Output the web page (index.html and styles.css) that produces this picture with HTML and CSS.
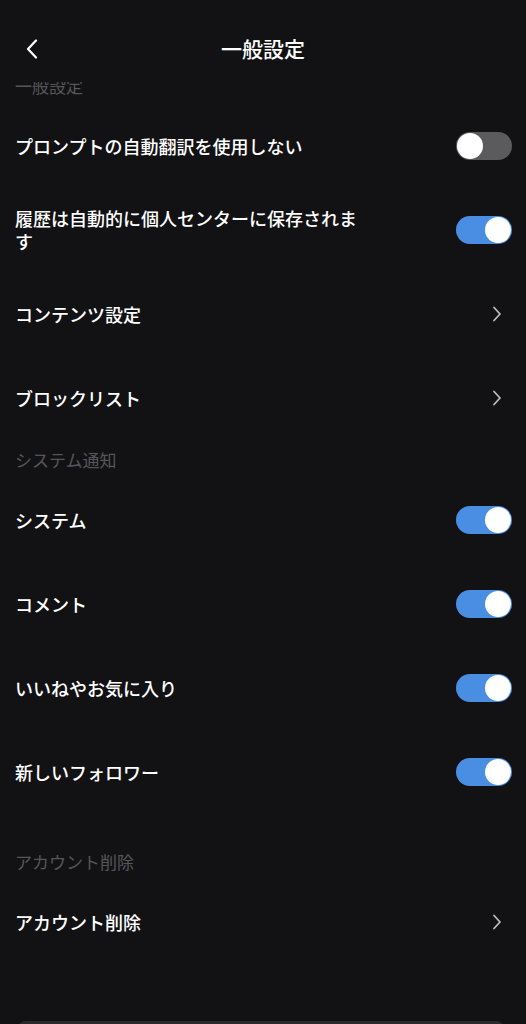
FILE: index.html
```html
<!DOCTYPE html>
<html lang="ja">
<head>
  <meta charset="UTF-8">
  <title>一般設定</title>
  <link rel="stylesheet" href="styles.css">
</head>
<body>
  <div class="screen">
    <div class="header">
      <span class="back">
        <svg width="12" height="20" viewBox="0 0 12 20"><path d="M10 1.5 L2 10 L10 18.5" fill="none" stroke="#fff" stroke-width="2.2" stroke-linecap="round" stroke-linejoin="round"/></svg>
      </span>
      <h1 class="title">一般設定</h1>
    </div>

    <div class="list">
      <div class="section-label">一般設定</div>
      <div class="row">
        <span class="label">プロンプトの自動翻訳を使用しない</span>
        <span class="toggle"></span>
      </div>
      <div class="row">
        <span class="label">履歴は自動的に個人センターに保存されます</span>
        <span class="toggle on"></span>
      </div>
      <div class="row">
        <span class="label">コンテンツ設定</span>
        <span class="chevron"><svg width="10" height="16" viewBox="0 0 10 16"><path d="M2 1.5 L8 8 L2 14.5" fill="none" stroke="#bdbdbd" stroke-width="1.8" stroke-linecap="round" stroke-linejoin="round"/></svg></span>
      </div>
      <div class="row">
        <span class="label">ブロックリスト</span>
        <span class="chevron"><svg width="10" height="16" viewBox="0 0 10 16"><path d="M2 1.5 L8 8 L2 14.5" fill="none" stroke="#bdbdbd" stroke-width="1.8" stroke-linecap="round" stroke-linejoin="round"/></svg></span>
      </div>

      <div class="section-label">システム通知</div>
      <div class="row">
        <span class="label">システム</span>
        <span class="toggle on"></span>
      </div>
      <div class="row">
        <span class="label">コメント</span>
        <span class="toggle on"></span>
      </div>
      <div class="row">
        <span class="label">いいねやお気に入り</span>
        <span class="toggle on"></span>
      </div>
      <div class="row">
        <span class="label">新しいフォロワー</span>
        <span class="toggle on"></span>
      </div>

      <div class="section-label spaced">アカウント削除</div>
      <div class="row">
        <span class="label">アカウント削除</span>
        <span class="chevron"><svg width="10" height="16" viewBox="0 0 10 16"><path d="M2 1.5 L8 8 L2 14.5" fill="none" stroke="#bdbdbd" stroke-width="1.8" stroke-linecap="round" stroke-linejoin="round"/></svg></span>
      </div>
    </div>

    <div class="sheet"></div>
  </div>
</body>
</html>
```

FILE: styles.css
```css
html, body {
  margin: 0;
  background: #121214;
}
body {
  font-family: "Noto Sans CJK JP", "Noto Sans", sans-serif;
  color: #fff;
}
.screen {
  height: 1024px;
  overflow: hidden;
}
.header {
  position: relative;
  z-index: 2;
  height: 82px;
  background: #121214;
  display: flex;
  align-items: center;
  justify-content: center;
  padding-top: 14px;
  box-sizing: border-box;
}
.back {
  position: absolute;
  left: 26px;
  top: 39px;
  display: flex;
}
.title {
  margin: 0;
  font-size: 21px;
  font-weight: 500;
  line-height: 1;
}
.list {
  margin-top: -16px;
  padding: 0 14px 0 15px;
}
.section-label {
  height: 38px;
  display: flex;
  align-items: center;
  font-size: 17px;
  color: #56565a;
}
.section-label.spaced {
  margin-top: 28px;
}
.row {
  height: 84px;
  display: flex;
  align-items: center;
  justify-content: space-between;
}
.label {
  font-size: 18px;
  font-weight: 500;
  line-height: 23px;
  max-width: 350px;
}
.toggle {
  width: 56px;
  height: 28px;
  border-radius: 14px;
  background: #5b5b5d;
  position: relative;
  flex-shrink: 0;
}
.toggle::after {
  content: "";
  position: absolute;
  top: 1px;
  left: 1px;
  width: 26px;
  height: 26px;
  border-radius: 50%;
  background: #fff;
}
.toggle.on {
  background: #4a8ee4;
}
.toggle.on::after {
  left: 29px;
}
.chevron {
  display: flex;
  margin-right: 10px;
}
.sheet {
  margin: 57px 22px 0 18px;
  height: 20px;
  background: #2a2a2c;
  border-radius: 8px 8px 0 0;
}
```
